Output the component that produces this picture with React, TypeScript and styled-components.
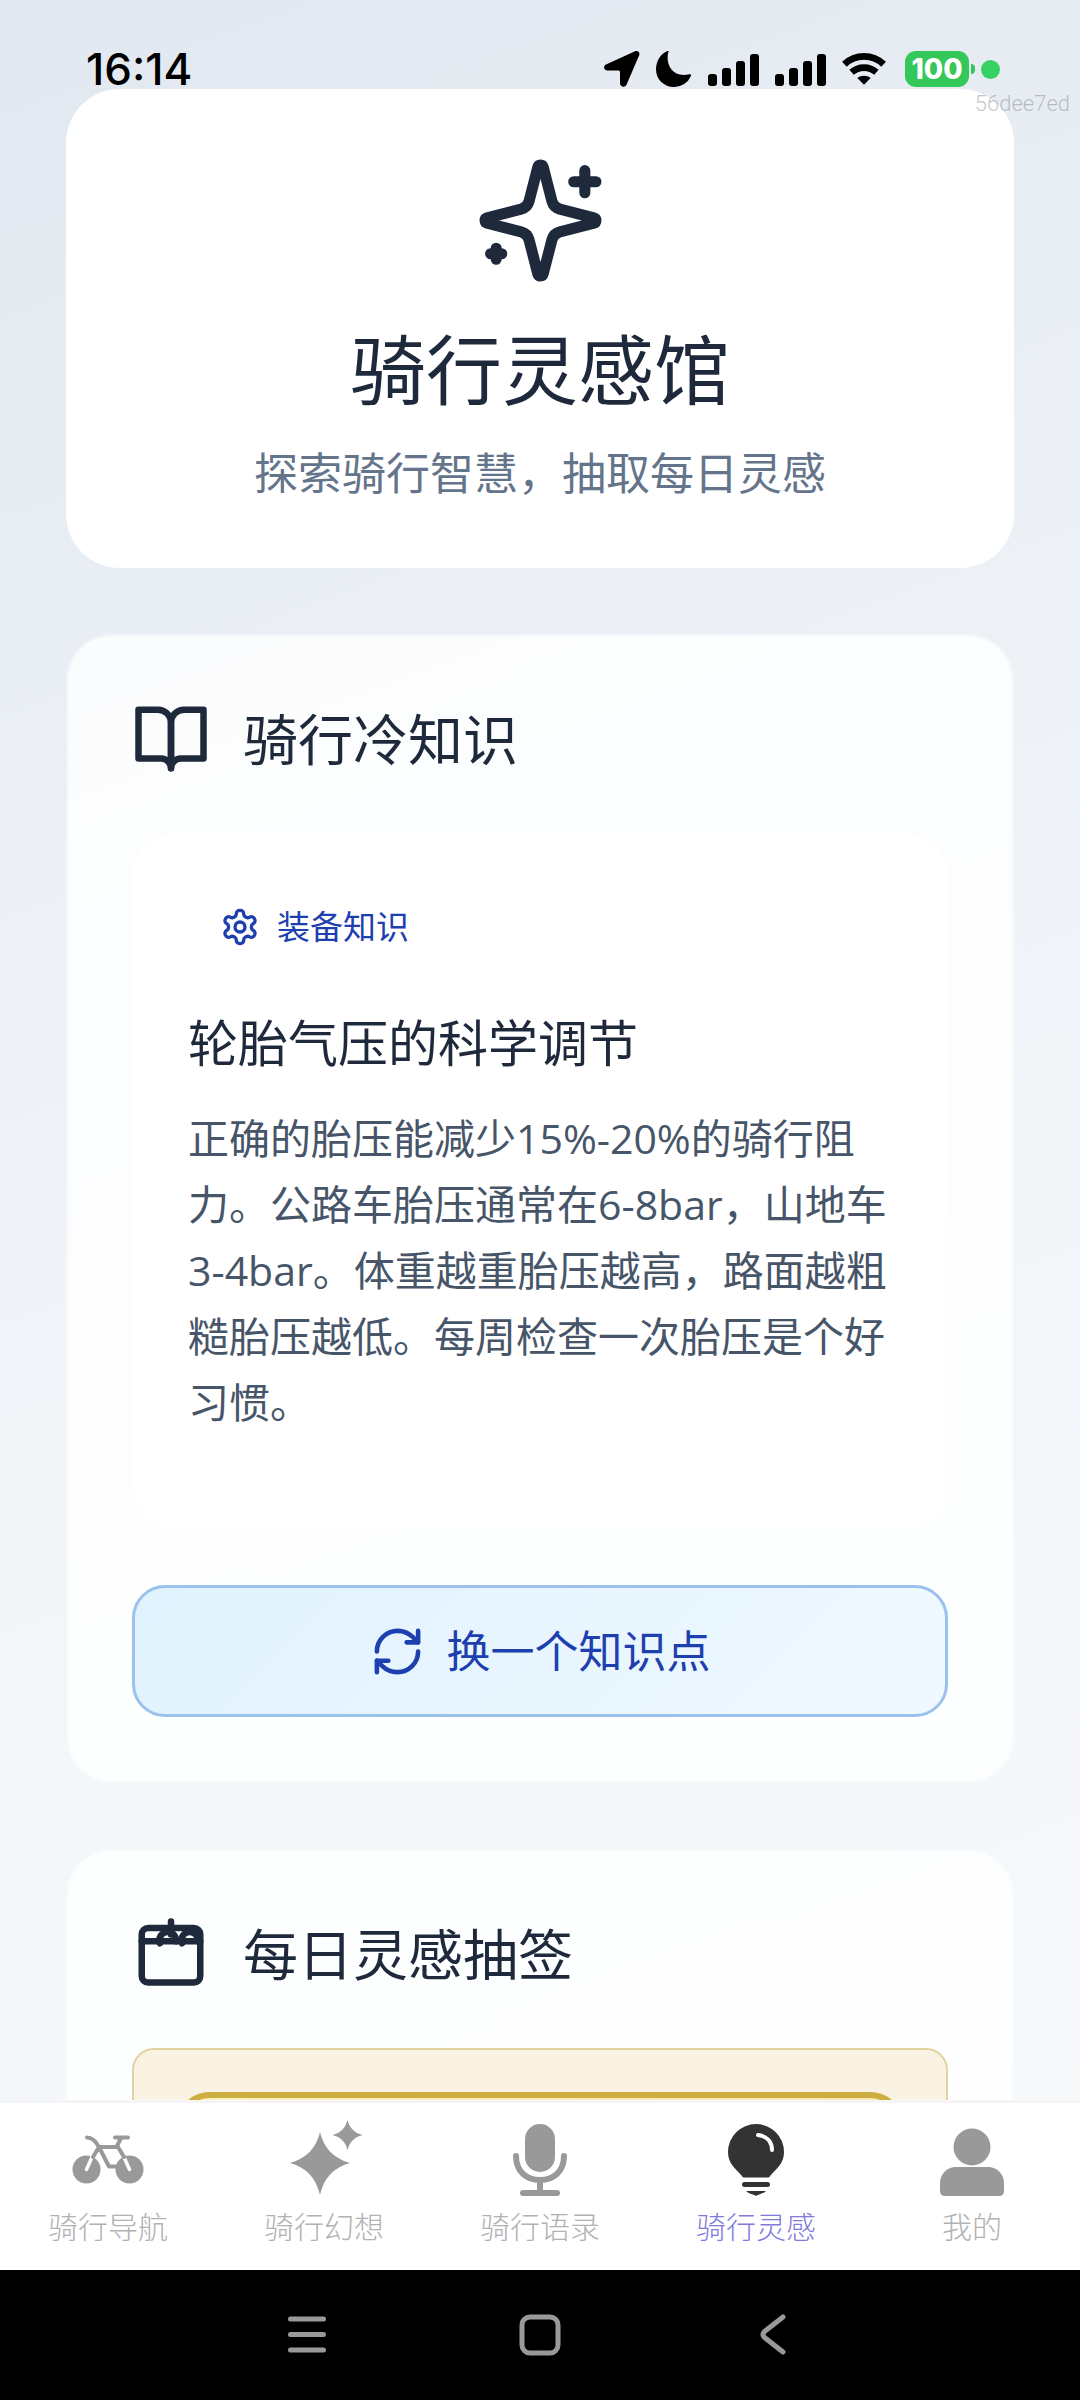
import React from "react";
import styled, { createGlobalStyle } from "styled-components";

const GlobalStyle = createGlobalStyle`
  *, *::before, *::after { box-sizing: border-box; }
  body { margin: 0; background: #000; }
  button { font: inherit; color: inherit; border: 0; padding: 0; background: none; cursor: pointer; }
  h1, h2, h3, p { margin: 0; font-weight: 400; }
  svg { display: block; flex: none; }
`;

const ink = "#1e293b";
const blue = "#1e40af";

const Screen = styled.div`
  position: relative;
  display: flex;
  flex-direction: column;
  height: 100vh;
  overflow: hidden;
  color: ${ink};
  background: linear-gradient(160deg, #e2e8f0 0%, #f1f5f9 50%, #f8fafc 100%);
  font-family: "Open Sans", "Noto Sans CJK SC", sans-serif;
`;

const StatusBar = styled.header`
  display: flex;
  align-items: flex-end;
  justify-content: space-between;
  flex: none;
  height: 89px;
  padding: 0 80px 2px 86px;
  color: #000;
`;

const Clock = styled.time`
  font-family: Inter, "Open Sans", sans-serif;
  font-size: 44px;
  font-weight: 500;
  line-height: 36px;
`;

const StatusIcons = styled.div`
  display: flex;
  align-items: center;
  gap: 16px;
  height: 36px;
`;

const Battery = styled.div`
  display: flex;
  align-items: center;
  gap: 2px;
  margin-left: 3px;
`;

const BatteryLevel = styled.span`
  width: 64px;
  height: 36px;
  border-radius: 11px;
  background: #34c759;
  color: #fff;
  font-family: Inter, sans-serif;
  font-size: 28px;
  font-weight: 800;
  line-height: 37px;
  text-align: center;
`;

const BatteryCap = styled.span`
  width: 4px;
  height: 10px;
  border-radius: 0 5px 5px 0;
  background: #34c759;
`;

const PrivacyDot = styled.span`
  width: 19px;
  height: 19px;
  margin-left: -10px;
  border-radius: 50%;
  background: #38d264;
`;

const Watermark = styled.span`
  position: absolute;
  top: 88px;
  right: 10px;
  color: rgba(120, 125, 130, 0.45);
  font-family: Roboto, sans-serif;
  font-size: 22px;
  font-weight: 300;
  line-height: 32px;
`;

const Content = styled.main`
  display: flex;
  flex: 1;
  flex-direction: column;
  gap: 66px;
  min-height: 0;
  padding: 0 66px;
  overflow: hidden;
`;

const Hero = styled.section`
  display: flex;
  flex: none;
  flex-direction: column;
  align-items: center;
  padding: 65px 66px 62px;
  border-radius: 54px;
  background: rgba(255, 255, 255, 0.97);
`;

const HeroTitle = styled.h1`
  margin-top: 33px;
  font-size: 76px;
  line-height: 100px;
`;

const HeroText = styled.p`
  margin-top: 20px;
  color: #64748b;
  font-size: 44px;
  line-height: 66px;
`;

const Card = styled.section`
  flex: none;
  padding: 64px;
  border: 2px solid rgba(255, 255, 255, 0.35);
  border-radius: 46px;
  background: rgba(255, 255, 255, 0.82);
  background-clip: padding-box;
`;

const CardHeader = styled.header`
  display: flex;
  align-items: center;
  gap: 33px;
  height: 78px;
`;

const CardTitle = styled.h2`
  font-size: 55px;
  line-height: 78px;
`;

const Knowledge = styled.article`
  margin: 55px 0 57px;
  padding: 55px 56px 93px;
  border-radius: 44px;
  background: rgba(255, 255, 255, 0.92);
`;

const Category = styled.div`
  display: flex;
  align-items: center;
  gap: 17px;
  height: 78px;
  padding: 0 32px;
  color: ${blue};
  font-size: 33px;
  line-height: 40px;
`;

const KnowledgeTitle = styled.h3`
  margin-top: 44px;
  font-size: 50px;
  line-height: 66px;
`;

const KnowledgeText = styled.p`
  margin-top: 29px;
  color: #475569;
  font-size: 41px;
  line-height: 66px;
`;

const RefreshButton = styled.button`
  display: flex;
  align-items: center;
  justify-content: center;
  gap: 22px;
  width: 100%;
  height: 132px;
  border: 3px solid #9bc2ec;
  border-radius: 33px;
  background: linear-gradient(135deg, #e0f2fe 0%, #f0f9ff 100%);
  color: ${blue};
  font-size: 44px;
  line-height: 66px;
`;

const DrawPanel = styled.div`
  margin-top: 55px;
  padding: 42px;
  border: 2px solid #e0d3a0;
  border-radius: 22px;
  background: linear-gradient(180deg, #faf2e3 0%, #faf5e1 100%);
`;

const DrawCard = styled.div`
  height: 400px;
  border: 6px solid #ceae40;
  border-radius: 34px;
  background: linear-gradient(135deg, #fff3bf 0%, #ffdfae 100%);
`;

const TabBar = styled.nav`
  display: flex;
  flex: none;
  height: 170px;
  border-top: 3px solid #f5f5f5;
  background: #fff;
`;

const Tab = styled.a<{ $active?: boolean }>`
  display: flex;
  flex: 1;
  flex-direction: column;
  align-items: center;
  gap: 8px;
  padding-top: 16px;
  color: ${(p) => (p.$active ? "#7f7bdc" : "#b2b2b2")};
  font-size: 30px;
  font-weight: 300;
  line-height: 40px;
  text-decoration: none;
`;

const SystemNav = styled.nav`
  display: flex;
  flex: none;
  justify-content: center;
  height: 130px;
  background: #000;
`;

const SystemButton = styled.button`
  display: flex;
  flex: 0 1 233px;
  align-items: center;
  justify-content: center;
`;

type StrokeProps = { size: number; children: React.ReactNode };

const StrokeIcon = ({ size, children }: StrokeProps) => (
  <svg
    width={size}
    height={size}
    viewBox="0 0 24 24"
    fill="none"
    stroke="currentColor"
    strokeWidth="2"
    strokeLinecap="round"
    strokeLinejoin="round"
    aria-hidden="true"
  >
    {children}
  </svg>
);

const SparklesIcon = () => (
  <StrokeIcon size={133}>
    <path d="M9.937 15.5A2 2 0 0 0 8.5 14.063l-6.135-1.582a.5.5 0 0 1 0-.962L8.5 9.936A2 2 0 0 0 9.937 8.5l1.582-6.135a.5.5 0 0 1 .963 0L14.063 8.5A2 2 0 0 0 15.5 9.937l6.135 1.581a.5.5 0 0 1 0 .964L15.5 14.063a2 2 0 0 0-1.437 1.437l-1.582 6.135a.5.5 0 0 1-.963 0z" />
    <path d="M20 3v4M22 5h-4M4 17v2M5 18H3" />
  </StrokeIcon>
);

const BookIcon = () => (
  <StrokeIcon size={78}>
    <path d="M2 3h6a4 4 0 0 1 4 4v14a3 3 0 0 0-3-3H2z" />
    <path d="M22 3h-6a4 4 0 0 0-4 4v14a3 3 0 0 1 3-3h7z" />
  </StrokeIcon>
);

const GearIcon = () => (
  <StrokeIcon size={40}>
    <path d="M12.22 2h-.44a2 2 0 0 0-2 2v.18a2 2 0 0 1-1 1.73l-.43.25a2 2 0 0 1-2 0l-.15-.08a2 2 0 0 0-2.73.73l-.22.38a2 2 0 0 0 .73 2.73l.15.1a2 2 0 0 1 1 1.72v.51a2 2 0 0 1-1 1.74l-.15.09a2 2 0 0 0-.73 2.73l.22.38a2 2 0 0 0 2.73.73l.15-.08a2 2 0 0 1 2 0l.43.25a2 2 0 0 1 1 1.73V20a2 2 0 0 0 2 2h.44a2 2 0 0 0 2-2v-.18a2 2 0 0 1 1-1.73l.43-.25a2 2 0 0 1 2 0l.15.08a2 2 0 0 0 2.73-.73l.22-.39a2 2 0 0 0-.73-2.73l-.15-.08a2 2 0 0 1-1-1.74v-.5a2 2 0 0 1 1-1.74l.15-.09a2 2 0 0 0 .73-2.73l-.22-.38a2 2 0 0 0-2.73-.73l-.15.08a2 2 0 0 1-2 0l-.43-.25a2 2 0 0 1-1-1.73V4a2 2 0 0 0-2-2z" />
    <circle cx="12" cy="12" r="3" />
  </StrokeIcon>
);

const RefreshIcon = () => (
  <StrokeIcon size={55}>
    <path d="M3 12a9 9 0 0 1 9-9 9.75 9.75 0 0 1 6.74 2.74L21 8" />
    <path d="M21 3v5h-5" />
    <path d="M21 12a9 9 0 0 1-9 9 9.75 9.75 0 0 1-6.74-2.74L3 16" />
    <path d="M8 16H3v5" />
  </StrokeIcon>
);

const CalendarIcon = () => (
  <StrokeIcon size={78}>
    <rect x="3" y="4" width="18" height="16.8" rx="2" />
    <path d="M3 8.1h18M12 2v4" />
    <path d="M8.6 8.7a2.55 2.55 0 1 1 4.9-.6" />
    <path d="M15.4 8.7a2.55 2.55 0 1 1 4.9-.6" />
  </StrokeIcon>
);

const LocationIcon = () => (
  <svg width="36" height="36" viewBox="0 0 36 36" aria-hidden="true">
    <path d="M31 .3c3-1 5 1 4.300 3.700L22.500 33.800c-1.500 3-6.500 2.400-6.500-1.500V21a1.500 1.500 0 0 0-1.500-1.500H3.500c-4 0-4.500-4.500-1.500-6z" />
  </svg>
);

const MoonIcon = () => (
  <svg width="36" height="36" viewBox="0 0 36 36" aria-hidden="true">
    <path d="M12.500.6C9 12 15.500 27.500 33.500 23.300c1.200-.2 1.900.6 1.400 1.600A18 18 0 0 1 18 36C8 36 0 28.500 0 18.500 0 10 4.500 3 11 .2c1-.4 1.800-.5 1.500.4z" />
  </svg>
);

const SignalIcon = () => (
  <svg width="51" height="36" viewBox="0 0 51 36" aria-hidden="true">
    <rect x="0" y="23" width="9" height="12" rx="3" />
    <rect x="14" y="17" width="9" height="18" rx="3" />
    <rect x="28" y="10" width="9" height="25" rx="3" />
    <rect x="42" y="3" width="9" height="32" rx="3" />
  </svg>
);

const WifiIcon = () => (
  <svg width="44" height="36" viewBox="0 0 46 36" aria-hidden="true">
    <g fill="none" stroke="#000" strokeWidth="7">
      <path d="M2.500 13C14 2 32 2 43.500 13" />
      <path d="M10 21.500c7.500-6.700 18.500-6.700 26 0" />
    </g>
    <path d="M16 27.500c4-3.400 10-3.400 14 0L23 34.500z" />
  </svg>
);

const BikeIcon = () => (
  <svg width="80" height="80" viewBox="0 0 80 80" fill="none" aria-hidden="true">
    <circle cx="18.500" cy="50.500" r="14" fill="#999" />
    <circle cx="61.500" cy="50.500" r="14" fill="#999" />
    <path d="M18.500 50.500L25 36M61.500 50.500L55 36" stroke="#fff" strokeWidth="3.500" strokeLinecap="round" />
    <g stroke="#999" strokeWidth="4" strokeLinecap="round" strokeLinejoin="round">
      <path d="M19 18.500c6 0 9 4 12 9.500h19L56 38M31 28L25 38M31 28L41 47.500h7M49 27l4-8M47 18.500h13" />
    </g>
  </svg>
);

const StarsIcon = () => (
  <svg width="80" height="80" viewBox="0 0 80 80" fill="#999" aria-hidden="true">
    <path d="M36 13c4 16 13 26 30 31-17 5-26 15-30 32-4-17-13-27-30-32 17-5 26-15 30-31z" />
    <path d="M63.500 1c2 8 7 13 15 15-8 2-13 7-15 15-2-8-7-13-15-15 8-2 13-7 15-15z" />
  </svg>
);

const MicIcon = () => (
  <svg width="80" height="80" viewBox="0 0 80 80" aria-hidden="true">
    <rect x="25" y="5" width="30" height="48" rx="15" fill="#999" />
    <path d="M16 37c0 16 11 24 24 24s24-8 24-24M40 61v13M23 74h34" fill="none" stroke="#999" strokeWidth="6" strokeLinecap="round" />
  </svg>
);

const BulbIcon = () => (
  <svg width="80" height="80" viewBox="0 0 80 80" aria-hidden="true">
    <path d="M40 5a28 28 0 0 1 28 28c0 12-8 17-13.500 23.500-.8 1.300-1 2-2.500 2H28c-1.500 0-1.700-.7-2.500-2C20 50 12 45 12 33A28 28 0 0 1 40 5z" fill="#333" />
    <rect x="26" y="63" width="28" height="5" rx="2.500" fill="#333" />
    <path d="M30 72h20c-2 2.500-7 3-10 5-3-2-8-2.500-10-5z" fill="#333" />
    <path d="M42 16c9 1 14 7 14 15" fill="none" stroke="#fff" strokeWidth="4" strokeLinecap="round" />
  </svg>
);

const PersonIcon = () => (
  <svg width="80" height="80" viewBox="0 0 80 80" fill="#999" aria-hidden="true">
    <circle cx="40" cy="28" r="18.500" />
    <path d="M24 48h32c9 0 16 7 16 16v8q0 5-5 5H13q-5 0-5-5v-8c0-9 7-16 16-16z" />
  </svg>
);

const tabs = [
  { label: "骑行导航", icon: <BikeIcon /> },
  { label: "骑行幻想", icon: <StarsIcon /> },
  { label: "骑行语录", icon: <MicIcon /> },
  { label: "骑行灵感", icon: <BulbIcon />, active: true },
  { label: "我的", icon: <PersonIcon /> },
];

const systemActions = [
  { label: "菜单", width: 40, shape: <path d="M3.500 5h33M3.500 20.500h33M3.500 36h33" /> },
  { label: "主页", width: 42, shape: <rect x="3" y="3" width="36" height="36" rx="8" /> },
  { label: "返回", width: 26, shape: <path d="M23 3L4.500 17.500q-3 3 0 6L23 38" /> },
];

export default function App() {
  return (
    <Screen>
      <GlobalStyle />
      <StatusBar>
        <Clock>16:14</Clock>
        <StatusIcons>
          <LocationIcon />
          <MoonIcon />
          <SignalIcon />
          <SignalIcon />
          <WifiIcon />
          <Battery>
            <BatteryLevel>100</BatteryLevel>
            <BatteryCap />
          </Battery>
          <PrivacyDot />
        </StatusIcons>
      </StatusBar>

      <Content>
        <Hero>
          <SparklesIcon />
          <HeroTitle>骑行灵感馆</HeroTitle>
          <HeroText>探索骑行智慧，抽取每日灵感</HeroText>
        </Hero>

        <Card>
          <CardHeader>
            <BookIcon />
            <CardTitle>骑行冷知识</CardTitle>
          </CardHeader>
          <Knowledge>
            <Category>
              <GearIcon />
              装备知识
            </Category>
            <KnowledgeTitle>轮胎气压的科学调节</KnowledgeTitle>
            <KnowledgeText>
              正确的胎压能减少15%-20%的骑行阻力。公路车胎压通常在6-8bar，山地车3-4bar。体重越重胎压越高，路面越粗糙胎压越低。每周检查一次胎压是个好习惯。
            </KnowledgeText>
          </Knowledge>
          <RefreshButton type="button">
            <RefreshIcon />
            换一个知识点
          </RefreshButton>
        </Card>

        <Card>
          <CardHeader>
            <CalendarIcon />
            <CardTitle>每日灵感抽签</CardTitle>
          </CardHeader>
          <DrawPanel>
            <DrawCard />
          </DrawPanel>
        </Card>
      </Content>

      <TabBar>
        {tabs.map((tab) => (
          <Tab key={tab.label} href="#" $active={tab.active}>
            {tab.icon}
            {tab.label}
          </Tab>
        ))}
      </TabBar>

      <SystemNav>
        {systemActions.map((action) => (
          <SystemButton key={action.label} type="button" aria-label={action.label}>
            <svg
              width={action.width}
              height="42"
              viewBox={`0 0 ${action.width} 42`}
              fill="none"
              stroke="#999"
              strokeWidth="5"
              strokeLinecap="round"
              strokeLinejoin="round"
            >
              {action.shape}
            </svg>
          </SystemButton>
        ))}
      </SystemNav>

      <Watermark>56dee7ed</Watermark>
    </Screen>
  );
}
